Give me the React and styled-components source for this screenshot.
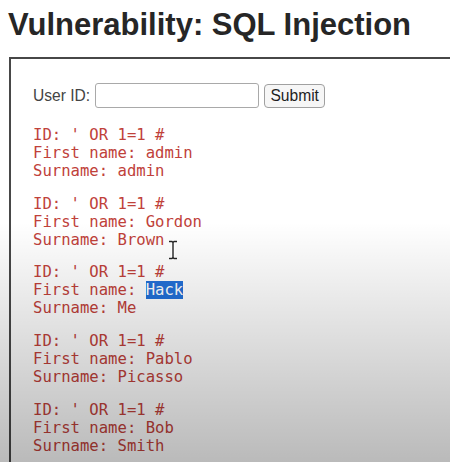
import React from 'react';
import styled, { createGlobalStyle } from 'styled-components';

const GlobalStyle = createGlobalStyle`
	html, body {
		margin: 0;
		padding: 0;
		background: #fff;
		overflow: hidden;
	}
	body {
		width: 450px;
		height: 462px;
		font-family: 'Liberation Sans', Arial, sans-serif;
	}
`;

const Page = styled.div`
	position: relative;
	width: 450px;
	height: 462px;
	overflow: hidden;
`;

const Title = styled.h1`
	margin: 7px 0 0 8px;
	font-size: 31px;
	line-height: 36px;
	font-weight: 700;
	color: #262626;
	white-space: nowrap;
`;

const Panel = styled.div`
	margin: 14px 0 0 9px;
	width: 480px;
	height: 420px;
	border: 2px solid #474747;
	border-right: none;
	border-bottom: none;
	padding: 24px 0 0 22px;
	box-sizing: border-box;
`;

const Form = styled.form`
	display: flex;
	align-items: center;
	gap: 5px;
	font-size: 15.6px;
	color: #444;
`;

const Input = styled.input`
	width: 164px;
	height: 25px;
	box-sizing: border-box;
	border: 1px solid #a9a9a9;
	border-radius: 3px;
	background: #fff;
	padding: 0 4px;
	outline: none;
`;

const Button = styled.button`
	height: 24px;
	width: 61px;
	box-sizing: border-box;
	border: 1px solid #a0a0a0;
	border-radius: 4px;
	background: #f6f6f6;
	font-family: 'Liberation Sans', Arial, sans-serif;
	font-size: 15.6px;
	color: #1e1e1e;
	padding: 0;
`;

const Results = styled.div`
	margin-top: 18px;
	display: flex;
	flex-direction: column;
	gap: 14.7px;
`;

const Record = styled.pre`
	margin: 0;
	font-family: 'DejaVu Sans Mono', monospace;
	font-size: 15.6px;
	line-height: 18px;
	color: #c0413a;
`;

const Selected = styled.span`
	background: #2270d8;
	color: #fff;
`;

const Shade = styled.div`
	position: absolute;
	left: 0;
	right: 0;
	top: 222px;
	bottom: 0;
	background: linear-gradient(to bottom, rgba(0, 0, 0, 0), rgba(0, 0, 0, 0.27));
	pointer-events: none;
`;

const Cursor = styled.svg`
	position: absolute;
	left: 167px;
	top: 240px;
	pointer-events: none;
`;

const records = [
	{ first: 'admin', last: 'admin' },
	{ first: 'Gordon', last: 'Brown' },
	{ first: 'Hack', last: 'Me', selected: true },
	{ first: 'Pablo', last: 'Picasso' },
	{ first: 'Bob', last: 'Smith' },
];

export default function App() {
	return (
		<Page>
			<GlobalStyle />
			<Title>Vulnerability: SQL Injection</Title>
			<Panel>
				<Form onSubmit={(e) => e.preventDefault()}>
					<span>User ID:</span>
					<Input type="text" />
					<Button type="submit">Submit</Button>
				</Form>
				<Results>
					{records.map((r, i) => (
						<Record key={i}>
							{"ID: ' OR 1=1 #\n"}
							{'First name: '}
							{r.selected ? <Selected>{r.first}</Selected> : r.first}
							{'\nSurname: ' + r.last}
						</Record>
					))}
				</Results>
			</Panel>
			<Shade />
			<Cursor width="12" height="20" viewBox="0 0 12 20">
				<path
					d="M2 1.5h3l1 1 1-1h3M6 2.5v15M2 18.5h3l1-1 1 1h3"
					fill="none"
					stroke="#fff"
					strokeWidth="3.2"
				/>
				<path
					d="M2 1.5h3l1 1 1-1h3M6 2.5v15M2 18.5h3l1-1 1 1h3"
					fill="none"
					stroke="#222"
					strokeWidth="1.4"
				/>
			</Cursor>
		</Page>
	);
}
